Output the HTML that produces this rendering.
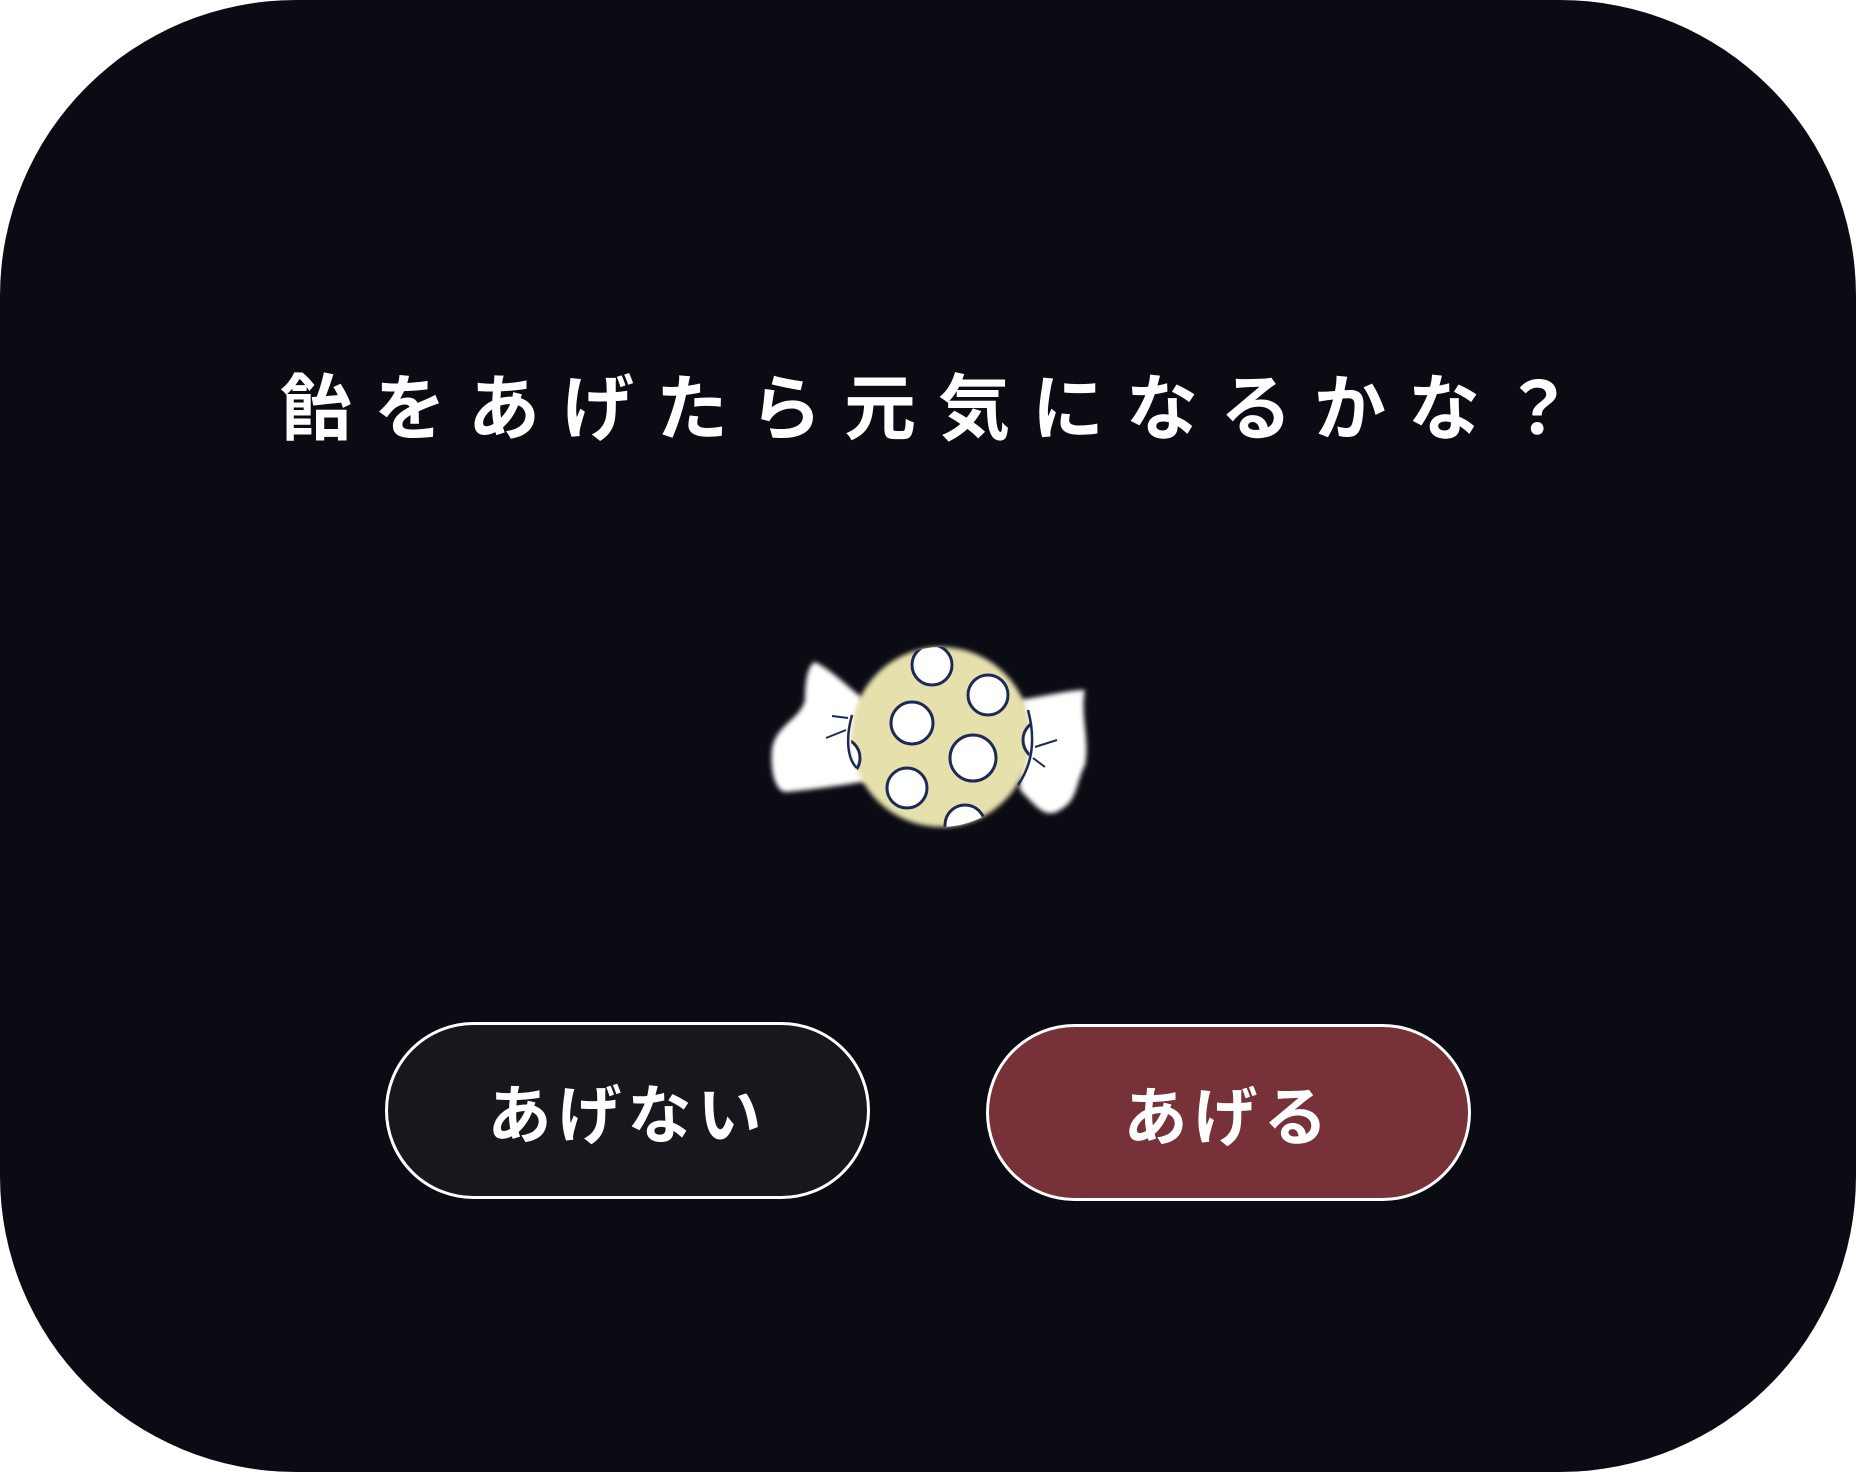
<!DOCTYPE html>
<html><head><meta charset="utf-8"><style>
html,body{margin:0;padding:0;background:#fff;width:1856px;height:1472px;overflow:hidden}
.card{position:absolute;left:0;top:0;width:1856px;height:1472px;background:#0b0b14;border-radius:296px}
.title{position:absolute;left:280px;top:360px;white-space:nowrap;color:#fff;font-family:"Liberation Sans","Noto Sans CJK JP",sans-serif;font-size:72px;letter-spacing:22px;line-height:100px;font-weight:700}
.btn{position:absolute;box-sizing:border-box;border:3px solid #fff;border-radius:90px;color:#fff;font-family:"Liberation Sans","Noto Sans CJK JP",sans-serif;font-size:64px;letter-spacing:6px;display:flex;align-items:center;justify-content:center;font-weight:700}
</style></head><body>
<div class="card"></div>
<div class="title">飴をあげたら元気になるかな？</div>
<svg style="position:absolute;left:0;top:0" width="1856" height="1472">
<defs><filter id="b"><feGaussianBlur stdDeviation="2.5"/></filter>
<clipPath id="c"><circle cx="941" cy="737" r="90"/></clipPath></defs>
<path d="M815 662 C835 672 850 690 872 705 L873 780 C845 785 810 790 785 792 C775 790 770 770 772 750 C775 725 800 720 805 700 C805 680 808 665 815 662Z" fill="#fff" filter="url(#b)"/>
<path d="M1020 700 C1050 695 1070 690 1085 690 C1080 715 1090 740 1085 765 C1075 785 1078 800 1060 810 C1045 820 1035 805 1020 790Z" fill="#fff" filter="url(#b)"/>
<circle cx="941" cy="737" r="90" fill="#e6e0ad" filter="url(#b)"/>
<g stroke="#1d2a55" stroke-width="3" fill="#fff" clip-path="url(#c)">
<circle cx="932" cy="665" r="20"/>
<circle cx="988" cy="695" r="20"/>
<circle cx="912" cy="723" r="21"/>
<circle cx="973" cy="758" r="23"/>
<circle cx="907" cy="788" r="20"/>
<circle cx="965" cy="825" r="20"/>
<circle cx="840" cy="690" r="20"/>
<circle cx="840" cy="758" r="20"/>
<circle cx="1043" cy="740" r="20"/>
</g>
<path d="M852 715 C845 740 848 760 857 768 M1028 710 C1036 740 1032 765 1018 785" stroke="#1d2a55" stroke-width="2.5" fill="none"/>
<path d="M832 716 L848 718 M826 738 L846 730 M1035 747 L1057 740 M1033 758 L1045 767" stroke="#1d2a55" stroke-width="2" fill="none"/>
</svg>
<div class="btn" style="left:385px;top:1022px;width:485px;height:177px;background:#18171e">あげない</div>
<div class="btn" style="left:986px;top:1024px;width:485px;height:177px;background:#763238">あげる</div>
</body></html>
